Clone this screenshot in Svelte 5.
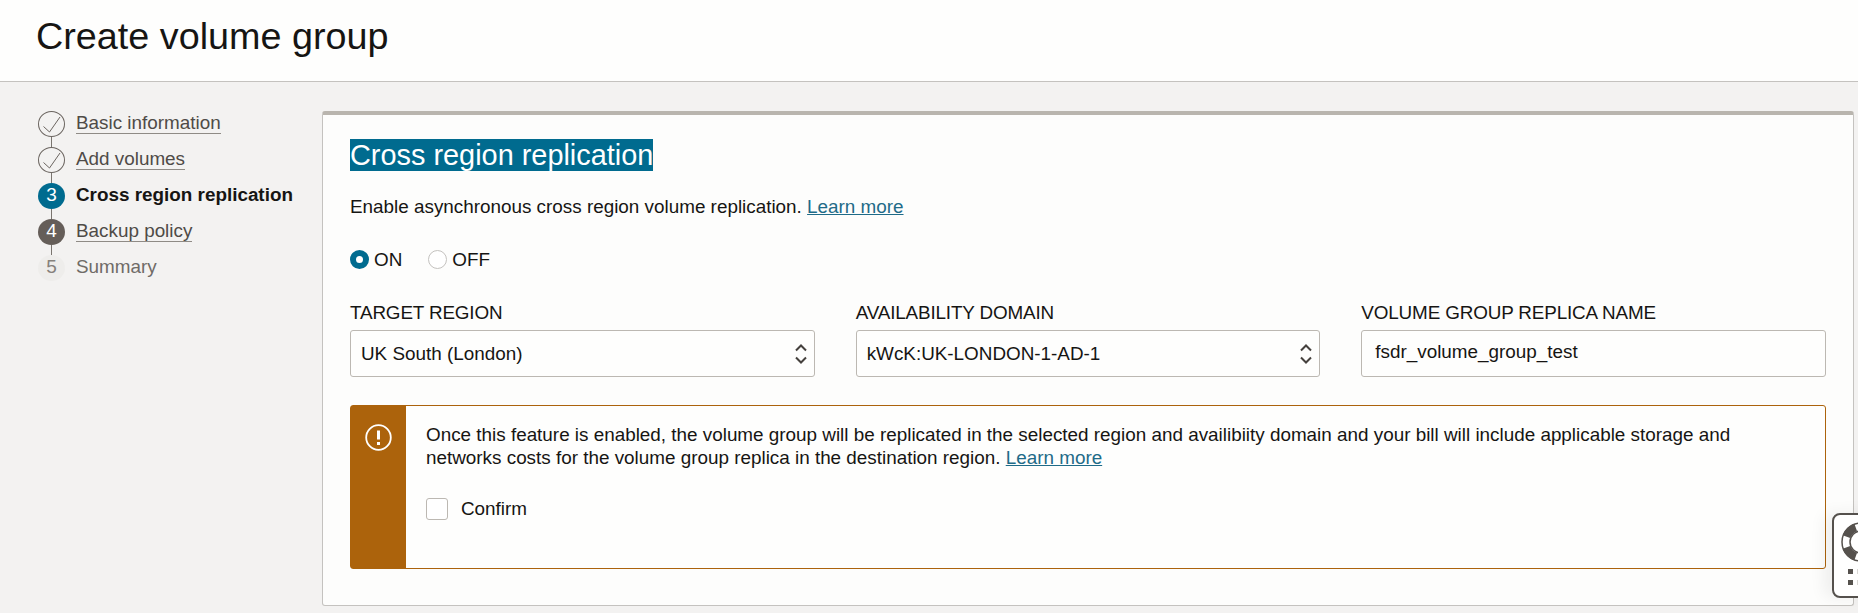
<script lang="ts">
  interface Step {
    label: string;
    state: 'done' | 'current' | 'next' | 'disabled';
    n: number;
  }

  const steps: Step[] = [
    { n: 1, label: 'Basic information', state: 'done' },
    { n: 2, label: 'Add volumes', state: 'done' },
    { n: 3, label: 'Cross region replication', state: 'current' },
    { n: 4, label: 'Backup policy', state: 'next' },
    { n: 5, label: 'Summary', state: 'disabled' },
  ];

  let enabled = $state(true);
  let confirmed = $state(false);
  let region = $state('UK South (London)');
  let domain = $state('kWcK:UK-LONDON-1-AD-1');
  let replicaName = $state('fsdr_volume_group_test');
</script>

<div class="page">
  <header class="top">
    <h1>Create volume group</h1>
  </header>

  <div class="body">
    <nav class="steps">
      {#each steps as step, i}
        <div class="step">
          <span class="badge badge--{step.state}">
            {#if step.state === 'done'}
              <svg viewBox="0 0 27 26" width="27" height="26" aria-hidden="true">
                <path d="M5.500 15.500l6 5.500L22 6" fill="none" stroke="#6b6560" stroke-width="1" />
              </svg>
            {:else}
              {step.n}
            {/if}
          </span>
          {#if i < steps.length - 1}
            <span class="line"></span>
          {/if}
          {#if step.state === 'done' || step.state === 'next'}
            <a href="#step" class="step-link">{step.label}</a>
          {:else}
            <span class="step-text step-text--{step.state}">{step.label}</span>
          {/if}
        </div>
      {/each}
    </nav>

    <main class="card">
      <h2><span class="selected">Cross region replication</span></h2>
      <p class="desc">
        Enable asynchronous cross region volume replication. <a href="#learn">Learn more</a>
      </p>

      <div class="radios">
        <button type="button" class="radio" class:radio--on={enabled} onclick={() => (enabled = true)}>
          <span class="dot"></span>ON
        </button>
        <button type="button" class="radio" class:radio--on={!enabled} onclick={() => (enabled = false)}>
          <span class="dot"></span>OFF
        </button>
      </div>

      <div class="fields">
        <label class="field">
          <span class="field-label">TARGET REGION</span>
          <span class="select">
            <select bind:value={region}>
              <option>UK South (London)</option>
            </select>
            <svg class="chevrons" viewBox="0 0 12 20" width="12" height="20" aria-hidden="true">
              <path d="M1 6.500L6 1.500l5 5M1 13.500l5 5 5-5" fill="none" stroke="#45413d" stroke-width="2" />
            </svg>
          </span>
        </label>
        <label class="field">
          <span class="field-label">AVAILABILITY DOMAIN</span>
          <span class="select">
            <select bind:value={domain}>
              <option>kWcK:UK-LONDON-1-AD-1</option>
            </select>
            <svg class="chevrons" viewBox="0 0 12 20" width="12" height="20" aria-hidden="true">
              <path d="M1 6.500L6 1.500l5 5M1 13.500l5 5 5-5" fill="none" stroke="#45413d" stroke-width="2" />
            </svg>
          </span>
        </label>
        <label class="field">
          <span class="field-label">VOLUME GROUP REPLICA NAME</span>
          <input type="text" bind:value={replicaName} />
        </label>
      </div>

      <section class="warning">
        <div class="warning-band">
          <svg viewBox="0 0 27 27" width="27" height="27" aria-hidden="true">
            <circle cx="13.500" cy="13.500" r="12.300" fill="none" stroke="#fff" stroke-width="1.800" />
            <path d="M13.500 6.500v9" stroke="#fff" stroke-width="3" />
            <path d="M13.500 18v3" stroke="#fff" stroke-width="3" />
          </svg>
        </div>
        <div class="warning-body">
          <p>
            Once this feature is enabled, the volume group will be replicated in the selected region and availibiity domain and your bill will include applicable storage and networks costs for the volume group replica in the destination region. <a href="#learn">Learn more</a>
          </p>
          <label class="confirm">
            <input type="checkbox" bind:checked={confirmed} />
            <span>Confirm</span>
          </label>
        </div>
      </section>
    </main>
  </div>

  <aside class="help-tab">
    <svg viewBox="0 0 40 40" width="40" height="40" aria-hidden="true">
      <circle cx="20" cy="20" r="19" fill="#fff" stroke="#55514d" stroke-width="1.500" />
      <circle
        cx="20"
        cy="20"
        r="15.500"
        fill="none"
        stroke="#55514d"
        stroke-width="8"
        pathLength="360"
        stroke-dasharray="50 40"
        stroke-dashoffset="-20"
      />
      <circle cx="20" cy="20" r="11" fill="none" stroke="#55514d" stroke-width="1.500" />
    </svg>
    <div class="grip">
      <span></span><span class="faint"></span>
      <span></span><span class="faint"></span>
    </div>
  </aside>
</div>

<style>
  :global(body) {
    margin: 0;
    background: #f3f2f1;
    font-family: 'Liberation Sans', Arial, sans-serif;
    color: #161513;
  }

  .page {
    position: relative;
    height: 100vh;
    overflow: hidden;
  }

  .top {
    height: 82px;
    box-sizing: border-box;
    padding: 0 36px;
    display: flex;
    align-items: center;
    background: #fefefd;
    border-bottom: 1px solid #c4c2bf;
  }

  h1 {
    margin: 0 0 9px;
    font-size: 37.760px;
    font-weight: 400;
    line-height: 44px;
  }

  .body {
    display: flex;
    align-items: flex-start;
    padding: 29px 4px 0 38px;
  }

  .steps {
    width: 284px;
    flex: none;
    display: flex;
    flex-direction: column;
    gap: 10px;
  }

  .step {
    position: relative;
    display: flex;
    align-items: center;
    gap: 11px;
    height: 26px;
    font-size: 18.880px;
  }

  .badge {
    width: 27px;
    height: 26px;
    box-sizing: border-box;
    padding-bottom: 2px;
    flex: none;
    border-radius: 50%;
    display: flex;
    align-items: center;
    justify-content: center;
    font-size: 19px;
  }

  .badge--done {
    padding-bottom: 0;
    border: 1px solid #6b6560;
    background: #f3f2f1;
  }

  .badge--done svg {
    margin: -1px;
  }

  .badge--current {
    background: #006b8f;
    color: #fff;
  }

  .badge--next {
    background: #655e59;
    color: #fff;
  }

  .badge--disabled {
    background: #eeedeb;
    color: #86817c;
  }

  .line {
    position: absolute;
    left: 13px;
    top: 26px;
    width: 1px;
    height: 10px;
    background: #7a756f;
  }

  .step-link,
  .step-text {
    margin-bottom: 2px;
  }

  .step-link {
    color: #4f4b47;
    text-decoration: none;
    border-bottom: 1px solid #8f8b86;
    line-height: 20px;
  }

  .step-text--current {
    font-weight: 700;
    color: #161513;
  }

  .step-text--disabled {
    color: #6f6b67;
  }

  .card {
    flex: 1;
    height: 495px;
    box-sizing: border-box;
    padding: 24px 27px 0;
    background: #fdfdfc;
    border: 1px solid #c4c2bf;
    border-top: 4px solid #b9b5ae;
    border-radius: 3px;
    min-width: 0;
  }

  h2 {
    margin: 0;
    font-size: 28.880px;
    font-weight: 400;
    line-height: 32px;
  }

  .selected {
    background: #006b8f;
    color: #fff;
    display: inline-block;
  }

  .desc {
    margin: 25px 0 0;
    font-size: 18.880px;
    line-height: 22px;
  }

  a {
    color: #1f6b88;
  }

  .radios {
    display: flex;
    gap: 26px;
    margin-top: 32px;
  }

  .radio {
    all: unset;
    display: flex;
    align-items: center;
    gap: 5px;
    font-size: 18.880px;
    line-height: 19px;
    cursor: pointer;
  }

  .dot {
    width: 19px;
    height: 19px;
    box-sizing: border-box;
    border-radius: 50%;
    border: 1px solid #c4c2bf;
    background: #fff;
  }

  .radio--on .dot {
    border: 6px solid #006b8f;
  }

  .fields {
    display: grid;
    grid-template-columns: repeat(3, 1fr);
    gap: 41px;
    margin-top: 34px;
  }

  .field {
    display: flex;
    flex-direction: column;
    gap: 7px;
    min-width: 0;
  }

  .field-label {
    font-size: 18.880px;
    line-height: 20px;
    letter-spacing: -0.15px;
  }

  .select {
    position: relative;
    display: block;
  }

  select,
  .field input {
    display: block;
    width: 100%;
    height: 47px;
    box-sizing: border-box;
    margin: 0;
    font: inherit;
    font-size: 18.880px;
    color: #161513;
    background: #fefefd;
    border: 1px solid #bcb8b2;
    border-radius: 3px;
    outline: none;
  }

  select {
    appearance: none;
    padding: 0 32px 0 10px;
  }

  .field input {
    padding: 0 13px 3px;
  }

  .chevrons {
    position: absolute;
    right: 8px;
    top: 14px;
    pointer-events: none;
  }

  .warning {
    display: flex;
    height: 164px;
    box-sizing: border-box;
    margin-top: 28px;
    background: #fefefd;
    border: 1px solid #ac630c;
    border-radius: 3px;
  }

  .warning-band {
    width: 55px;
    flex: none;
    background: #ac630c;
    display: flex;
    justify-content: center;
    align-items: flex-start;
    padding-top: 18px;
    box-sizing: border-box;
  }

  .warning-body {
    padding: 18px 20px 0;
    font-size: 18.880px;
  }

  .warning-body p {
    margin: 0;
    line-height: 22.500px;
  }

  .confirm {
    display: flex;
    align-items: center;
    gap: 13px;
    margin-top: 29px;
  }

  .confirm input {
    appearance: none;
    width: 22px;
    height: 22px;
    box-sizing: border-box;
    margin: 0;
    background: #fff;
    border: 1px solid #bcb8b2;
    border-radius: 3px;
  }

  .help-tab {
    position: absolute;
    left: 1832px;
    top: 513px;
    width: 60px;
    height: 85px;
    box-sizing: border-box;
    padding: 7px 0 0 7px;
    background: #fff;
    border: 2px solid #55514d;
    border-radius: 8px;
    box-shadow: -8px 0 16px rgba(0, 0, 0, 0.06);
  }

  .help-tab svg {
    display: block;
  }

  .grip {
    display: grid;
    grid-template-columns: 5px 5px;
    gap: 6px 4px;
    margin: 7px 0 0 7px;
  }

  .grip span {
    height: 5px;
    background: #55514d;
  }

  .grip .faint {
    background: #d9d7d4;
  }
</style>
